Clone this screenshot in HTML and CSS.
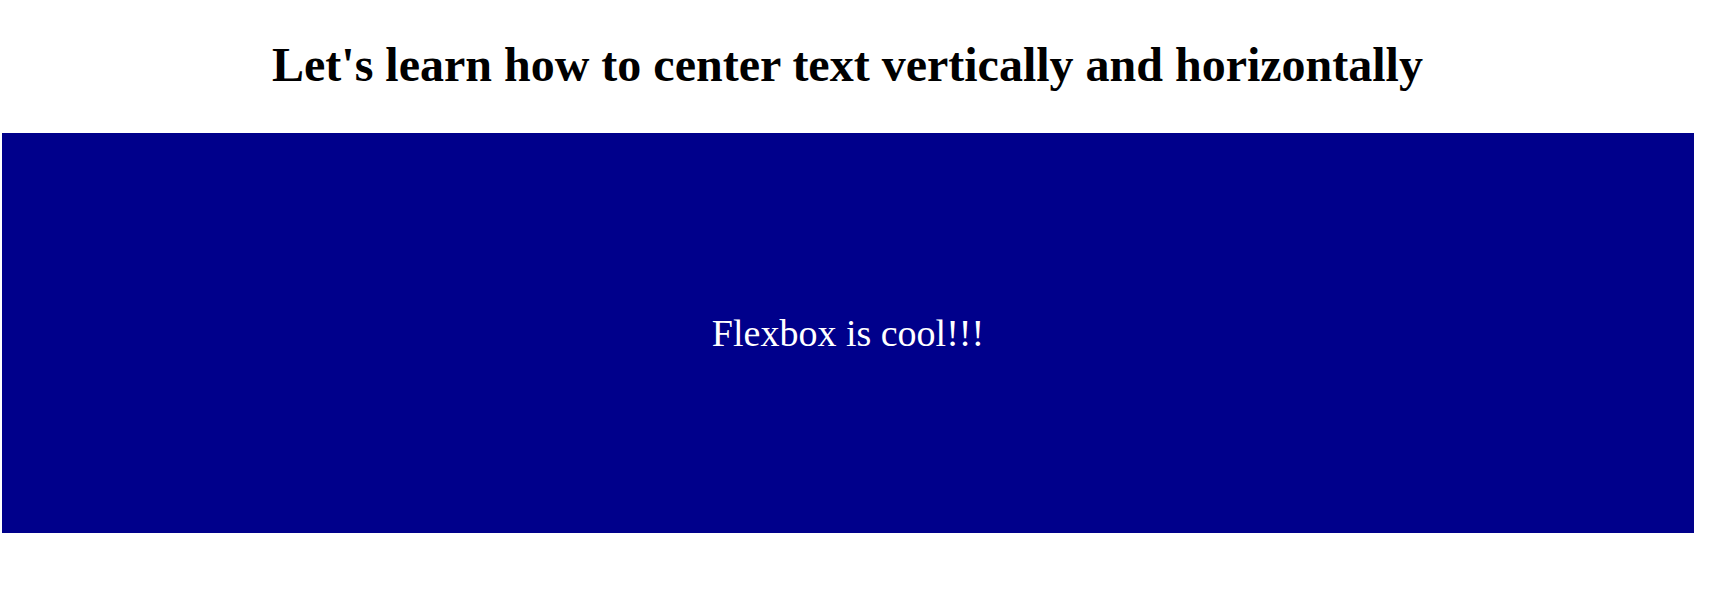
FILE: index.html
```html
<!DOCTYPE html>
<html>
<head>
<meta charset="utf-8">
<link rel="stylesheet" href="styles.css">
</head>
<body>
<div class="page">
  <h1 class="title">Let's learn how to center text vertically and horizontally</h1>
  <div class="box">
    <p class="box-text">Flexbox is cool!!!</p>
  </div>
</div>
</body>
</html>
```
FILE: styles.css
```css
html, body {
  margin: 0;
  padding: 0;
  background: #ffffff;
}
.page {
  width: 1695px;
  font-family: "Liberation Serif", "Times New Roman", serif;
}
.title {
  margin: 37px 0 40px 0;
  font-size: 48px;
  line-height: 56px;
  font-weight: bold;
  text-align: center;
  color: #000000;
}
.box {
  margin-left: 2px;
  width: 1692px;
  height: 400px;
  background: #00008b;
  display: flex;
  align-items: center;
  justify-content: center;
}
.box-text {
  margin: 0;
  color: #ffffff;
  font-size: 38px;
}
```
